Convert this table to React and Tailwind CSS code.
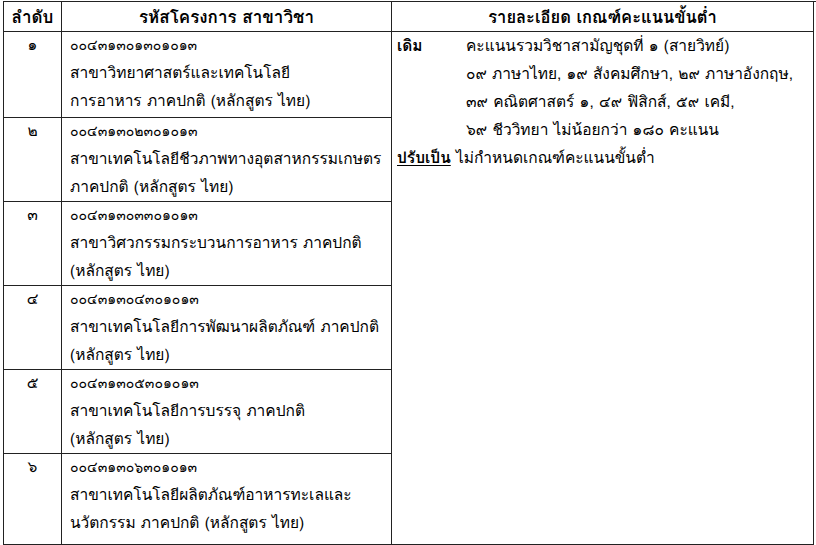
import React from "react";

const rows = [
  ["๑", "๐๐๔๓๑๓๐๑๓๐๑๐๑๓", ["สาขาวิทยาศาสตร์และเทคโนโลยี", "การอาหาร ภาคปกติ (หลักสูตร ไทย)"]],
  ["๒", "๐๐๔๓๑๓๐๒๓๐๑๐๑๓", ["สาขาเทคโนโลยีชีวภาพทางอุตสาหกรรมเกษตร", "ภาคปกติ (หลักสูตร ไทย)"]],
  ["๓", "๐๐๔๓๑๓๐๓๓๐๑๐๑๓", ["สาขาวิศวกรรมกระบวนการอาหาร ภาคปกติ", "(หลักสูตร ไทย)"]],
  ["๔", "๐๐๔๓๑๓๐๔๓๐๑๐๑๓", ["สาขาเทคโนโลยีการพัฒนาผลิตภัณฑ์ ภาคปกติ", "(หลักสูตร ไทย)"]],
  ["๕", "๐๐๔๓๑๓๐๕๓๐๑๐๑๓", ["สาขาเทคโนโลยีการบรรจุ ภาคปกติ", "(หลักสูตร ไทย)"]],
  ["๖", "๐๐๔๓๑๓๐๖๓๐๑๐๑๓", ["สาขาเทคโนโลยีผลิตภัณฑ์อาหารทะเลและ", "นวัตกรรม ภาคปกติ (หลักสูตร ไทย)"]],
];

export default function App() {
  return (
    <div className="w-[816px] h-[545px] bg-white text-black overflow-hidden pl-[3px] pt-[1px] font-['Loma',sans-serif]">
      <div className="grid grid-cols-[58px_330px_422px] grid-rows-[30px_86px_84px_84px_84px_84px_91px] border-l-[1.5px] border-t border-[#222] text-[15.5px] leading-[28px] whitespace-nowrap">
        <div className="border-r-[1.5px] border-b-[1.5px] border-[#222] flex items-center justify-center font-bold text-[17px]">ลำดับ</div>
        <div className="border-r-[1.5px] border-b-[1.5px] border-[#222] flex items-center justify-center font-bold text-[17px]">รหัสโครงการ สาขาวิชา</div>
        <div className="border-r-[1.5px] border-b-[1.5px] border-[#222] flex items-center justify-center font-bold text-[16.5px]">รายละเอียด เกณฑ์คะแนนขั้นต่ำ</div>
        <div className="row-start-2 row-span-6 col-start-3 border-r-[1.5px] border-b-[1.5px] border-[#222] pl-[5px]">
          <div className="flex">
            <div className="w-[69px] font-bold">เดิม</div>
            <div>
              <div>คะแนนรวมวิชาสามัญชุดที่ ๑ (สายวิทย์)</div>
              <div>๐๙ ภาษาไทย, ๑๙ สังคมศึกษา, ๒๙ ภาษาอังกฤษ,</div>
              <div>๓๙ คณิตศาสตร์ ๑, ๔๙ ฟิสิกส์, ๕๙ เคมี,</div>
              <div>๖๙ ชีววิทยา ไม่น้อยกว่า ๑๘๐ คะแนน</div>
            </div>
          </div>
          <div>
            <span className="font-bold underline underline-offset-2">ปรับเป็น</span> ไม่กำหนดเกณฑ์คะแนนขั้นต่ำ
          </div>
        </div>
        {rows.map(([n, code, lines], i) => (
          <React.Fragment key={i}>
            <div className="col-start-1 border-r-[1.5px] border-b-[1.5px] border-[#222] text-center -mt-px">{n}</div>
            <div className="col-start-2 border-r-[1.5px] border-b-[1.5px] border-[#222] pl-[8px]">
              <div className="text-[14px] -mt-px">{code}</div>
              {lines.map((l, j) => (
                <div key={j}>{l}</div>
              ))}
            </div>
          </React.Fragment>
        ))}
      </div>
    </div>
  );
}
